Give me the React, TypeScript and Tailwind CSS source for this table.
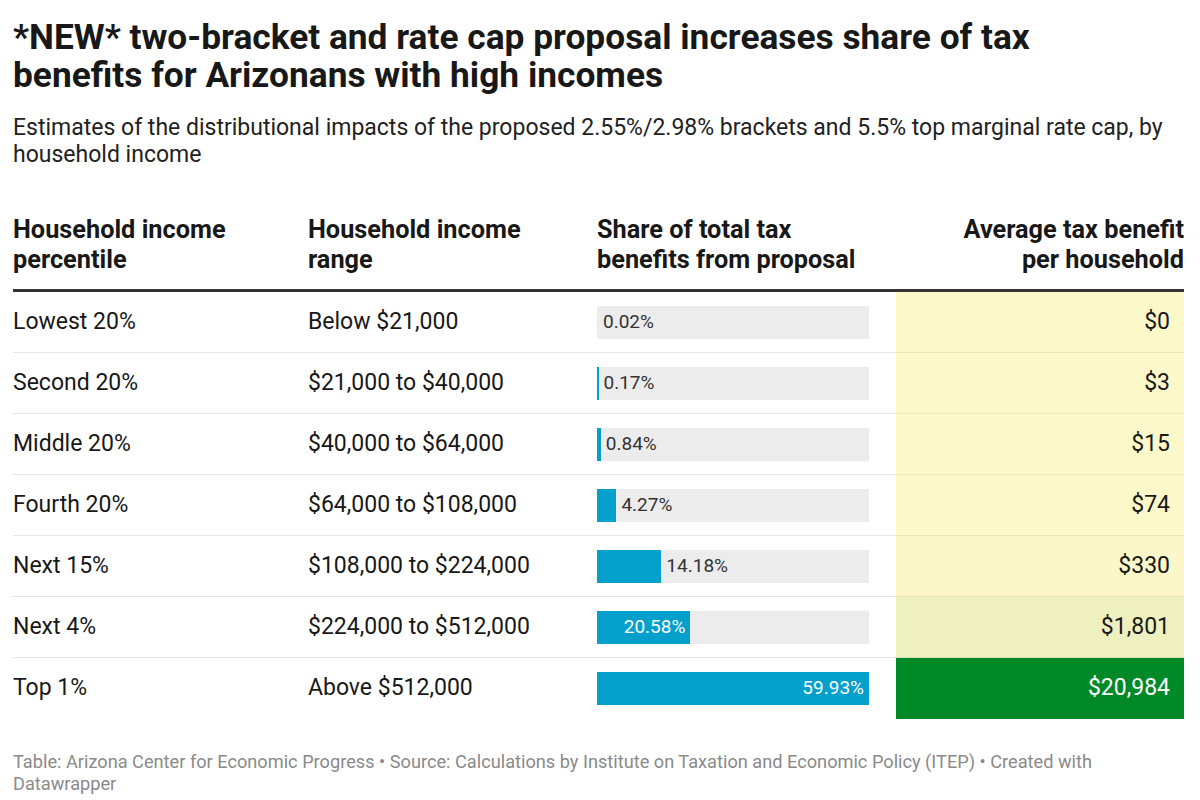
import React from 'react';

interface Row {
  percentile: string;
  range: string;
  share: number;
  benefit: string;
  cell: string;
}

const ROWS: Row[] = [
  { percentile: 'Lowest 20%', range: 'Below $21,000', share: 0.02, benefit: '$0', cell: 'bg-[#fdf8ca] text-[#1a1a1a]' },
  { percentile: 'Second 20%', range: '$21,000 to $40,000', share: 0.17, benefit: '$3', cell: 'bg-[#fdf8ca] text-[#1a1a1a]' },
  { percentile: 'Middle 20%', range: '$40,000 to $64,000', share: 0.84, benefit: '$15', cell: 'bg-[#fdf8ca] text-[#1a1a1a]' },
  { percentile: 'Fourth 20%', range: '$64,000 to $108,000', share: 4.27, benefit: '$74', cell: 'bg-[#fdf8ca] text-[#1a1a1a]' },
  { percentile: 'Next 15%', range: '$108,000 to $224,000', share: 14.18, benefit: '$330', cell: 'bg-[#fbf7c8] text-[#1a1a1a]' },
  { percentile: 'Next 4%', range: '$224,000 to $512,000', share: 20.58, benefit: '$1,801', cell: 'bg-[#eef0c0] text-[#1a1a1a]' },
  { percentile: 'Top 1%', range: 'Above $512,000', share: 59.93, benefit: '$20,984', cell: 'bg-[#008a27] text-white' },
];

const MAX_SHARE = 59.93;
const BAR_W = 272;

function Bar({ share }: { share: number }) {
  const raw = (share / MAX_SHARE) * BAR_W;
  const w = raw < 0.5 ? 0 : Math.max(raw, 1.5);
  const inside = share > 15;
  return (
    <div className="relative h-[33px] w-[272px] bg-[#ececec]">
      {w > 0 && <div className="absolute left-0 top-0 bottom-0 bg-[#04a0cc]" style={{ width: w }} />}
      {inside ? (
        <span
          className="absolute top-0 bottom-0 flex items-center justify-end pr-[5px] text-[19px] text-white"
          style={{ width: w }}
        >
          {share.toFixed(2)}%
        </span>
      ) : (
        <span
          className="absolute top-0 bottom-0 flex items-center text-[19px] text-[#333]"
          style={{ left: Math.max(w, 1) + 5 }}
        >
          {share.toFixed(2)}%
        </span>
      )}
    </div>
  );
}

export default function App() {
  return (
    <div className="w-[1200px] h-[800px] bg-white px-[13px] pt-[18px] font-['Roboto',sans-serif] text-[#181818] overflow-hidden">
      <h1 className="text-[35.3px] leading-[38px] font-bold w-[1100px]">
        *NEW* two-bracket and rate cap proposal increases share of tax benefits for Arizonans with high incomes
      </h1>
      <p className="mt-[20px] text-[23px] leading-[27px] text-[#222]">
        Estimates of the distributional impacts of the proposed 2.55%/2.98% brackets and 5.5% top marginal rate cap, by household income
      </p>

      <div className="mt-[47px] w-[1171px]">
        <div className="flex border-b-[3px] border-[#333] pb-[14px] text-[25.3px] leading-[30px] font-bold">
          <div className="w-[295px]">Household income<br />percentile</div>
          <div className="w-[289px]">Household income<br />range</div>
          <div className="w-[299px]">Share of total tax<br />benefits from proposal</div>
          <div className="w-[288px] text-right">Average tax benefit<br />per household</div>
        </div>

        {ROWS.map((r, i) => {
          const last = i === ROWS.length - 1;
          const border = last ? '' : 'border-b border-[#e4e4e4]';
          const cellBorder = last ? '' : 'border-b border-black/[0.07]';
          return (
            <div key={r.percentile} className="flex text-[23px]">
              <div className={`w-[295px] h-[61px] flex items-center ${border}`}>{r.percentile}</div>
              <div className={`w-[289px] h-[61px] flex items-center ${border}`}>{r.range}</div>
              <div className={`w-[299px] h-[61px] flex items-center ${border}`}>
                <Bar share={r.share} />
              </div>
              <div className={`w-[288px] h-[61px] flex items-center justify-end pr-[14px] ${r.cell} ${cellBorder}`}>
                {r.benefit}
              </div>
            </div>
          );
        })}
      </div>

      <div className="mt-[32px] text-[18.2px] leading-[22px] text-[#8a8a8a] w-[1100px]">
        Table: Arizona Center for Economic Progress • Source: Calculations by Institute on Taxation and Economic Policy (ITEP) • Created with Datawrapper
      </div>
    </div>
  );
}
